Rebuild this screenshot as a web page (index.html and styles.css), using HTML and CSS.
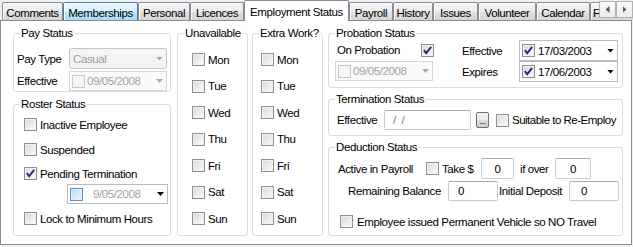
FILE: index.html
```html
<!DOCTYPE html>
<html>
<head>
<meta charset="utf-8">
<title>Employment Status</title>
<link rel="stylesheet" href="styles.css">
</head>
<body>
<div class="tabstrip">
  <div class="tab t-comments">Comments</div>
  <div class="tab hot t-members">Memberships</div>
  <div class="tab t-personal">Personal</div>
  <div class="tab t-licences">Licences</div>
  <div class="tab active t-emp">Employment Status</div>
  <div class="tab t-payroll">Payroll</div>
  <div class="tab t-history">History</div>
  <div class="tab t-issues">Issues</div>
  <div class="tab t-vol">Volunteer</div>
  <div class="tab t-cal">Calendar</div>
  <div class="tab t-f">F</div>
  <div class="scroller">
    <span class="sbtn"><span class="tri-l"></span></span>
    <span class="sbtn"><span class="tri-r"></span></span>
  </div>
</div>

<div class="panel">
  <div class="col col1">
    <div class="group g-pay">
      <div class="gtitle">Pay Status</div>
      <div class="pay-body">
        <div class="frow">
          <span class="lbl lbl-pay">Pay Type</span>
          <div class="combo dis"><span class="dtext">Casual</span><span class="arrow dis"></span></div>
        </div>
        <div class="frow frow2">
          <span class="lbl lbl-pay">Effective</span>
          <div class="dtp dis dtp-pay"><span class="cb dis"></span><span class="dtext">09/05/2008</span><span class="arrow dis"></span></div>
        </div>
      </div>
    </div>
    <div class="group g-roster">
      <div class="gtitle">Roster Status</div>
      <div class="roster-body">
        <div class="cbrow"><span class="cb"></span><span>Inactive Employee</span></div>
        <div class="cbrow r-susp"><span class="cb"></span><span>Suspended</span></div>
        <div class="cbrow r-pend"><span class="cb on"><svg width="11" height="11" viewBox="0 0 11 11"><path d="M1.8 5.2 4.2 8.2 9.2 1.8"/></svg></span><span>Pending Termination</span></div>
        <div class="dtp r-date"><span class="cb hot"></span><span class="dtext grey pad-day">9/05/2008</span><span class="arrow"></span></div>
        <div class="cbrow r-lock"><span class="cb"></span><span>Lock to Minimum Hours</span></div>
      </div>
    </div>
  </div>

  <div class="group days days-un">
    <div class="gtitle">Unavailable</div>
    <div class="days-body">
      <div class="cbrow"><span class="cb"></span><span>Mon</span></div>
      <div class="cbrow"><span class="cb"></span><span>Tue</span></div>
      <div class="cbrow"><span class="cb"></span><span>Wed</span></div>
      <div class="cbrow"><span class="cb"></span><span>Thu</span></div>
      <div class="cbrow"><span class="cb"></span><span>Fri</span></div>
      <div class="cbrow"><span class="cb"></span><span>Sat</span></div>
      <div class="cbrow"><span class="cb"></span><span>Sun</span></div>
    </div>
  </div>

  <div class="group days days-ex">
    <div class="gtitle">Extra Work?</div>
    <div class="days-body">
      <div class="cbrow"><span class="cb"></span><span>Mon</span></div>
      <div class="cbrow"><span class="cb"></span><span>Tue</span></div>
      <div class="cbrow"><span class="cb"></span><span>Wed</span></div>
      <div class="cbrow"><span class="cb"></span><span>Thu</span></div>
      <div class="cbrow"><span class="cb"></span><span>Fri</span></div>
      <div class="cbrow"><span class="cb"></span><span>Sat</span></div>
      <div class="cbrow"><span class="cb"></span><span>Sun</span></div>
    </div>
  </div>

  <div class="col col4">
    <div class="group g-prob">
      <div class="gtitle">Probation Status</div>
      <div class="prob-body">
        <div class="prob-left">
          <div class="prob-row1">
            <span class="lbl prob-lbl">On Probation</span>
            <span class="cb on"><svg width="11" height="11" viewBox="0 0 11 11"><path d="M1.8 5.2 4.2 8.2 9.2 1.8"/></svg></span>
          </div>
          <div class="dtp dis dtp-prob-off"><span class="cb dis"></span><span class="dtext">09/05/2008</span><span class="arrow dis"></span></div>
        </div>
        <div class="prob-right">
          <div class="prow">
            <span class="lbl prow-lbl">Effective</span>
            <div class="dtp dtp-prob"><span class="cb on"><svg width="11" height="11" viewBox="0 0 11 11"><path d="M1.8 5.2 4.2 8.2 9.2 1.8"/></svg></span><span class="dtext">17/03/2003</span><span class="arrow"></span></div>
          </div>
          <div class="prow">
            <span class="lbl prow-lbl">Expires</span>
            <div class="dtp dtp-prob"><span class="cb on"><svg width="11" height="11" viewBox="0 0 11 11"><path d="M1.8 5.2 4.2 8.2 9.2 1.8"/></svg></span><span class="dtext">17/06/2003</span><span class="arrow"></span></div>
          </div>
        </div>
      </div>
    </div>

    <div class="group g-term">
      <div class="gtitle">Termination Status</div>
      <div class="term-body">
        <span class="lbl term-lbl">Effective</span>
        <div class="tb term-tb"><span class="mask">/&nbsp;&nbsp;/</span></div>
        <span class="dots">...</span>
        <span class="cb term-cb"></span>
        <span class="term-cbl">Suitable to Re-Employ</span>
      </div>
    </div>

    <div class="group g-ded">
      <div class="gtitle">Deduction Status</div>
      <div class="ded-body">
        <div class="drow drow1">
          <span class="lbl d-active">Active in Payroll</span>
          <span class="cb"></span>
          <span class="lbl d-take">Take $</span>
          <div class="tb tb-c d-in1">0</div>
          <span class="lbl d-over">if over</span>
          <div class="tb tb-c d-in2">0</div>
        </div>
        <div class="drow drow2">
          <span class="lbl d-rem">Remaining Balance</span>
          <div class="tb d-in3">0</div>
          <span class="lbl d-init">Initial Deposit</span>
          <div class="tb d-in4">0</div>
        </div>
        <div class="cbrow drow3">
          <span class="cb d-cb3"></span>
          <span class="d-veh">Employee issued Permanent Vehicle so NO Travel</span>
        </div>
      </div>
    </div>
  </div>
</div>
</body>
</html>
```

FILE: styles.css
```css
* { box-sizing: border-box; }
html, body { margin: 0; padding: 0; }
body {
  width: 633px;
  height: 247px;
  overflow: hidden;
  background: #f0f0f0;
  font-family: "Liberation Sans", Arial, sans-serif;
  font-size: 11.5px;
  letter-spacing: -0.4px;
  line-height: 14px;
  color: #000;
}

/* ---------- tab strip ---------- */
.tabstrip {
  position: relative;
  z-index: 2;
  display: flex;
  align-items: flex-end;
  height: 21px;
  padding-left: 2px;
  overflow: hidden;
}
.tab {
  flex: none;
  height: 18px;
  margin-bottom: 1px;
  padding-top: 3px;
  border: 1px solid #898c95;
  border-bottom: 0;
  border-radius: 2px 2px 0 0;
  background: linear-gradient(#f4f4f4, #ececec 50%, #e0e0e0 51%, #d6d6d6);
  box-shadow: inset 1px 1px 0 #fcfcfc;
  text-align: center;
  white-space: nowrap;
  overflow: hidden;
}
.tab.hot {
  border-color: #3c7fb1;
  background: linear-gradient(#eaf6fd, #d9f0fc 50%, #bee6fd 51%, #a7d9f5);
}
.tab.active {
  height: 21px;
  margin-bottom: 0;
  padding-top: 4px;
  background: #fff;
  box-shadow: none;
}
.t-comments { width: 61px; }
.t-members { width: 75px; }
.t-personal { width: 52px; }
.t-licences { width: 54px; }
.t-emp { width: 105px; }
.t-payroll { width: 44px; }
.t-history { width: 40px; }
.t-issues { width: 45px; }
.t-vol { width: 58px; }
.t-cal { width: 54px; }
.t-f { width: 60px; text-align: left; padding-left: 2px; }

.scroller {
  position: absolute;
  top: 1px;
  right: 0;
  display: flex;
}
.sbtn {
  width: 17px;
  height: 17px;
  border: 1px solid #b4b4b4;
  background: linear-gradient(#fafafa, #ececec);
  display: flex;
  align-items: center;
  justify-content: center;
}
.tri-l, .tri-r {
  width: 4px;
  height: 7px;
  background: #4e5a6e;
}
.tri-l { clip-path: polygon(100% 0, 100% 100%, 0 50%); }
.tri-r { clip-path: polygon(0 0, 100% 50%, 0 100%); }

/* ---------- panel ---------- */
.panel {
  margin-top: -1px;
  width: 632px;
  height: 225px;
  border: 1px solid #898c95;
  background: #fff;
  display: flex;
  padding: 12px 8px 8px 12px;
}
.col { display: flex; flex-direction: column; flex: none; }
.col1 { width: 158px; }
.days-un { width: 71px; margin-left: 6px; flex: none; }
.days-ex { width: 71px; margin-left: 4px; flex: none; }
.col4 { width: 295px; margin-left: 5px; }

.group {
  border: 1px solid #d5dfe5;
  border-radius: 3px;
}
.gtitle {
  margin: -8px 0 0 6px;
  padding: 0 1px;
  height: 14px;
  width: max-content;
  background: #fff;
  white-space: nowrap;
}
.lbl { flex: none; white-space: nowrap; }

/* ---------- controls ---------- */
.cb {
  flex: none;
  width: 13px;
  height: 13px;
  border: 1px solid #8e8f8f;
  background: linear-gradient(135deg, #d3d6da 0%, #eeeeee 60%, #fafafa 100%);
  box-shadow: inset 0 0 0 1px #f2f2f2;
  display: block;
}
.cb svg { display: block; }
.cb svg path { fill: none; stroke: #2b2b7e; stroke-width: 1.9; }
.cb.dis {
  border-color: #c8c8c8;
  background: #f5f5f5;
  box-shadow: none;
}
.cb.hot {
  border-color: #4f93cf;
  background: linear-gradient(135deg, #b6daf5 0%, #d6ebfa 60%, #eaf5fd 100%);
  box-shadow: inset 0 0 0 1px #e3f1fc;
}

.arrow {
  flex: none;
  width: 7px;
  height: 4px;
  background: #000;
  clip-path: polygon(0 0, 100% 0, 50% 100%);
}
.arrow.dis { background: #a8a8a8; }

.combo {
  flex: none;
  display: flex;
  align-items: center;
  padding: 0 3px 0 3px;
  border: 1px solid #c3c6ca;
  border-radius: 3px;
  background: #f4f4f4;
  color: #9d9d9d;
}
.dtext { flex: 1; white-space: nowrap; }
.dtp {
  flex: none;
  display: flex;
  align-items: center;
  padding: 0 3px 0 2px;
  border: 1px solid #b9bcc2;
  background: #fff;
}
.dtp .cb { margin-right: 2px; }
.dtp.dis { border-color: #d6d6d6; background: #fafafa; color: #a3a3a3; }
.grey { color: #a3a3a3; }
.pad-day { padding-left: 8px; }

.tb {
  flex: none;
  display: flex;
  align-items: center;
  height: 100%;
  border: 1px solid #c9ccd2;
  border-top-color: #abadb3;
  border-radius: 2px;
  background: #fff;
  white-space: nowrap;
}
.tb-c { justify-content: center; }

.cbrow {
  display: flex;
  align-items: center;
  height: 15px;
  white-space: nowrap;
}
.cbrow .cb { margin-right: 3px; }

/* ---------- pay status ---------- */
.g-pay { height: 59px; flex: none; }
.pay-body { padding: 8px 3px 0 3px; }
.frow { display: flex; align-items: center; }
.frow2 { margin-top: 2px; }
.lbl-pay { width: 52px; }
.combo { width: 98px; height: 21px; }
.dtp-pay { width: 98px; height: 20px; }

/* ---------- roster ---------- */
.g-roster { margin-top: 12px; flex: 1; }
.roster-body { padding: 6px 0 0 10px; }
.r-susp { margin-top: 10px; }
.r-pend { margin-top: 9px; }
.r-date { margin: 3px 0 0 43px; width: 101px; height: 20px; }
.r-lock { margin-top: 7px; }

/* ---------- days ---------- */
.days-body {
  display: flex;
  flex-direction: column;
  gap: 11.5px;
  padding-top: 12px;
}
.days-un .days-body { padding-left: 14px; }
.days-ex .days-body { padding-left: 8px; }

/* ---------- probation ---------- */
.g-prob { height: 55px; flex: none; }
.prob-body { display: flex; padding-left: 6px; }
.prob-left { width: 98px; flex: none; }
.prob-row1 { display: flex; align-items: center; height: 20px; }
.prob-lbl { width: 86px; padding-left: 2px; }
.dtp-prob-off { margin-top: 1px; width: 98px; height: 20px; }
.prob-right { margin-left: 29px; }
.prow { display: flex; align-items: center; height: 21px; }
.prow-lbl { width: 57px; }
.dtp-prob { width: 99px; height: 21px; }
.dtp-prob .cb { margin-right: 3px; }

/* ---------- termination ---------- */
.g-term { height: 37px; margin-top: 11px; flex: none; }
.term-body {
  display: flex;
  align-items: center;
  height: 20px;
  margin-top: 4px;
  padding-left: 8px;
}
.term-lbl { width: 47px; }
.term-tb { width: 87px; }
.mask { padding-left: 8px; color: #7a7a7a; }
.dots {
  flex: none;
  margin-left: 5px;
  width: 13px;
  height: 16px;
  border: 1px solid #707070;
  border-radius: 2px;
  background: linear-gradient(#f2f2f2, #ebebeb 50%, #dddddd 51%, #cfcfcf);
  font-size: 9px;
  line-height: 8px;
  display: flex;
  align-items: flex-end;
  justify-content: center;
  padding-bottom: 2px;
  letter-spacing: -0.5px;
}
.term-cb { margin-left: 7px; }
.term-cbl { margin-left: 3px; white-space: nowrap; letter-spacing: -0.5px; }

/* ---------- deduction ---------- */
.g-ded { margin-top: 11px; flex: 1; }
.ded-body { padding: 4px 0 0 9px; }
.drow { display: flex; align-items: center; }
.drow1 { height: 21px; }
.drow2 { height: 20px; margin-top: 2px; }
.drow3 { margin-top: 13px; }
.d-active { width: 88px; }
.d-take { width: 39px; margin-left: 3px; }
.d-in1 { width: 33px; }
.d-over { width: 35px; margin-left: 6px; }
.d-in2 { width: 36px; }
.d-rem { width: 100px; margin-left: 10px; }
.d-in3 { width: 50px; padding-left: 9px; }
.d-init { width: 70px; margin-left: 1px; }
.d-in4 { width: 50px; padding-left: 11px; }
.drow3 .d-cb3 { margin-left: 2px; margin-right: 4px; }
```
